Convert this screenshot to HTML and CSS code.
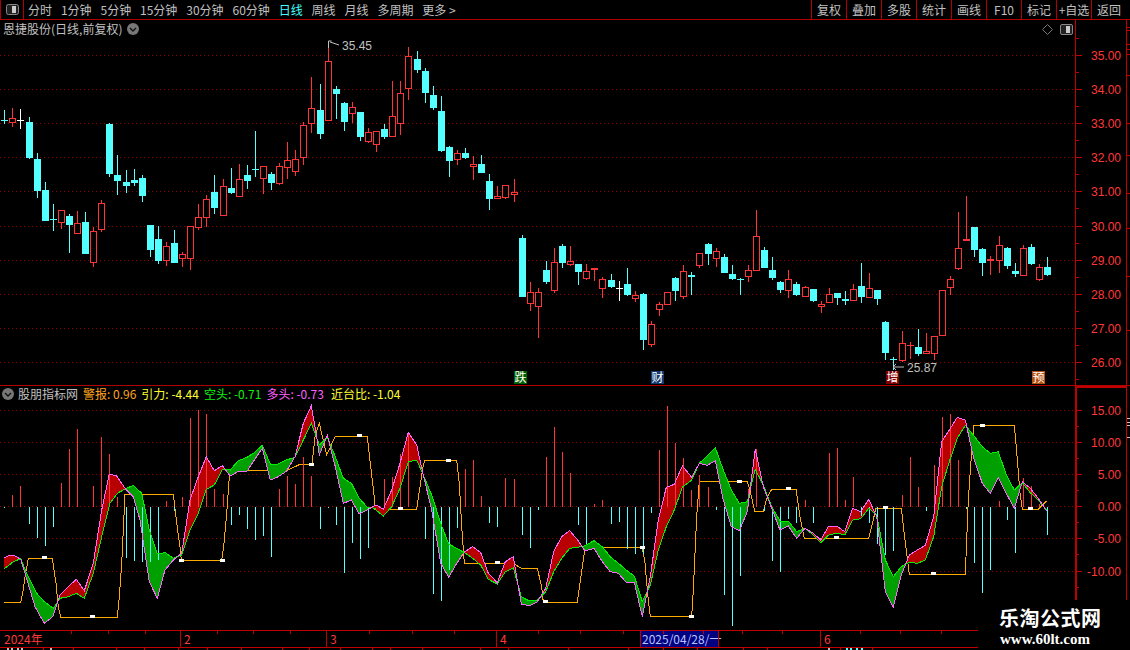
FILE: index.html
```html
<!DOCTYPE html>
<html lang="zh">
<head>
<meta charset="utf-8">
<title>恩捷股份</title>
<link rel="stylesheet" href="styles.css">
</head>
<body>
<div class="app">
  <header class="toolbar">
    <div class="toggle">
      <svg class="toggle-icon" width="13" height="11" viewBox="0 0 13 11"><rect x=".5" y=".5" width="12" height="10" rx="2" fill="#222" stroke="#888"/><rect x="6" y="2" width="4" height="7" fill="#ccc"/></svg>
    </div>
    <nav class="tabs">
      <span class="tab">分时</span><span class="tab">1分钟</span><span class="tab">5分钟</span><span class="tab">15分钟</span><span class="tab">30分钟</span><span class="tab">60分钟</span><span class="tab tab-active">日线</span><span class="tab">周线</span><span class="tab">月线</span><span class="tab">多周期</span><span class="tab">更多 &gt;</span>
    </nav>
    <div class="actions">
      <span class="action">复权</span><span class="action">叠加</span><span class="action">多股</span><span class="action">统计</span><span class="action">画线</span><span class="action">F10</span><span class="action">标记</span><span class="action">+自选</span><span class="action">返回</span>
    </div>
  </header>

  <section class="price-panel">
    <svg id="price" class="chart" width="1130" height="365" viewBox="0 20 1130 365"></svg>
    <div class="panel-title">
      <span>恩捷股份(日线,前复权)</span>
      <svg class="chevron" width="12" height="12" viewBox="0 0 12 12"><circle cx="6" cy="6" r="6" fill="#777"/><path d="M3 5l3 3 3-3" fill="none" stroke="#111" stroke-width="1.4"/></svg>
    </div>
    <div class="panel-tools">
      <svg width="11" height="11" viewBox="0 0 11 11"><path d="M5.5.5l5 5-5 5-5-5z" fill="none" stroke="#777"/></svg>
      <svg width="13" height="11" viewBox="0 0 13 11"><rect x=".5" y=".5" width="12" height="10" rx="1.5" fill="#222" stroke="#888"/><rect x="6" y="2" width="4" height="7" fill="#ccc"/></svg>
    </div>
  </section>

  <section class="indicator-panel">
    <svg id="indicator" class="chart" width="1130" height="244" viewBox="0 386 1130 244"></svg>
    <div class="indicator-title">
      <svg class="chevron-left" width="12" height="12" viewBox="0 0 12 12"><circle cx="6" cy="6" r="6" fill="#777"/><path d="M3 5l3 3 3-3" fill="none" stroke="#111" stroke-width="1.4"/></svg>
      <span class="ind-name">股朋指标网</span>
      <span class="ind-orange">警报: 0.96</span>
      <span class="ind-yellow">引力: -4.44</span>
      <span class="ind-green">空头: -0.71</span>
      <span class="ind-pink">多头: -0.73</span>
      <span class="ind-yellow ind-last">近台比: -1.04</span>
    </div>
  </section>

  <footer class="date-bar">
    <span class="date-cell">2024年</span>
    <span class="date-cell">2</span>
    <span class="date-cell">3</span>
    <span class="date-cell">4</span>
    <span class="date-cell date-current">2025/04/28/一</span>
    <span class="date-cell"></span>
    <span class="date-cell">6</span>
    <svg id="dateTicks" class="date-ticks" width="978" height="3" viewBox="0 0 978 3"></svg>
  </footer>
  <div class="sub-bar">
    <svg id="subTicks" width="978" height="2" viewBox="0 648 978 2"></svg>
  </div>

  <div class="watermark">
    <div class="wm-title">乐淘公式网</div>
    <div class="wm-url">www.60lt.com</div>
  </div>
</div>
<script src="chart.js"></script>
</body>
</html>
```
FILE: styles.css
```css
* { box-sizing: border-box; }
html, body { margin: 0; padding: 0; background: #000; }
body {
  width: 1130px;
  height: 650px;
  overflow: hidden;
  font-family: "Noto Sans CJK SC", "Liberation Sans", sans-serif;
  font-size: 12px;
  color: #c0c0c0;
}
.app {
  position: relative;
  width: 1130px;
  height: 650px;
  display: flex;
  flex-direction: column;
  background: #000;
}
.toolbar {
  height: 20px;
  flex: none;
  display: flex;
  align-items: stretch;
  border-bottom: 1px solid #b00000;
  line-height: 19px;
}
.toggle {
  width: 24px;
  display: flex;
  align-items: center;
  justify-content: center;
  border-left: 1px solid #b00000;
  border-right: 1px solid #b00000;
}
.tabs {
  display: flex;
  gap: 8.9px;
  margin-left: 4px;
}
.tab-active { color: #4ff; }
.actions {
  display: flex;
  margin-left: auto;
  margin-right: 4px;
}
.action {
  width: 35px;
  text-align: center;
  border-left: 1px solid #b00000;
  white-space: nowrap;
}
.price-panel {
  position: relative;
  height: 366px;
  flex: none;
  border-bottom: 1px solid #b00000;
}
.indicator-panel {
  position: relative;
  height: 244px;
  flex: none;
}
.chart { display: block; }
.panel-title {
  position: absolute;
  left: 3px;
  top: 0;
  height: 18px;
  line-height: 18px;
  display: flex;
  align-items: center;
  gap: 5px;
}
.panel-tools {
  position: absolute;
  top: 4px;
  left: 1042px;
  display: flex;
  gap: 7px;
  align-items: center;
}
.indicator-title {
  position: absolute;
  left: 2px;
  top: 0;
  height: 16px;
  line-height: 16px;
  display: flex;
  align-items: center;
  white-space: nowrap;
  gap: 5px;
}
.ind-name { margin-left: -1px; }
.ind-orange { color: #ffa51e; }
.ind-yellow { color: #ffff30; }
.ind-green { color: #10f010; }
.ind-pink { color: #ff60ff; }
.ind-last { margin-left: 2px; }
.date-bar {
  position: relative;
  width: 978px;
  height: 18px;
  flex: none;
  display: grid;
  grid-template-columns: 180px 146px 170px 144px 78px 102px 158px;
  border-top: 1px solid #c00000;
  border-bottom: 1px solid #c00000;
  line-height: 16px;
  color: #ff3838;
}
.date-cell {
  padding-left: 3px;
  border-left: 1px solid #c00000;
}
.date-cell:first-child {
  border-left: 0;
  padding-left: 4px;
}
.date-current {
  background: #000080;
  color: #b8c4ff;
  padding-left: 1px;
  white-space: nowrap;
}
.date-ticks {
  position: absolute;
  left: 0;
  top: 0;
}
.sub-bar {
  height: 2px;
  flex: none;
  overflow: hidden;
}
.sub-bar svg { display: block; }
.watermark {
  position: absolute;
  left: 999px;
  top: 605px;
  color: #fff;
}
.wm-title {
  font-family: "Noto Sans CJK SC", sans-serif;
  font-weight: 700;
  font-size: 20px;
  letter-spacing: .5px;
  line-height: 26px;
}
.wm-url {
  font-family: "Liberation Serif", serif;
  font-weight: 700;
  font-size: 15px;
  line-height: 16px;
  margin-left: 1px;
}
.axis-text {
  font-family: "Liberation Sans", sans-serif;
  font-size: 12px;
  fill: #ff3838;
  text-anchor: end;
}
.note-text {
  font-family: "Liberation Sans", sans-serif;
  font-size: 12px;
  fill: #c0c0c0;
}
.tag-text {
  font-family: "Noto Sans CJK SC", sans-serif;
  font-size: 12px;
  fill: #fff;
  text-anchor: middle;
}
```
FILE: chart.js
```js
var xOf = function (i) { return Math.round(4.33 + 8.083 * i); };
var RED = '#ff3434', CYAN = '#54ffff';
var GRID = '#900000';

// top, bottom, wick top, wick bottom, colour
var candles = [
[120,120,110,124,'c'],[118,123,108,127,'r'],[120,120,109,129,'w'],[122,158,117,159,'c'],[159,191,153,198,'c'],
[190,221,182,221,'c'],[219,219,204,231,'c'],[210,223,210,229,'r'],[216,225,214,253,'c'],[223,234,211,234,'r'],
[222,254,212,254,'c'],[231,263,227,267,'r'],[203,230,200,232,'r'],[124,174,123,177,'c'],[175,181,155,195,'c'],
[182,186,170,193,'c'],[180,183,169,186,'c'],[178,196,175,202,'c'],[225,250,225,257,'c'],[239,261,226,264,'c'],
[246,261,242,266,'r'],[243,263,230,263,'c'],[254,259,252,267,'r'],[226,259,226,270,'r'],[217,228,204,230,'r'],
[199,218,195,227,'r'],[192,208,175,214,'c'],[186,216,179,216,'r'],[188,193,168,194,'c'],[179,197,164,197,'r'],
[175,181,165,189,'c'],[169,169,131,177,'c'],[166,179,166,194,'r'],[174,183,172,190,'c'],[166,184,163,185,'r'],
[160,168,142,179,'r'],[159,172,150,176,'r'],[125,158,122,165,'r'],[108,124,77,133,'r'],[110,134,84,139,'c'],
[61,121,41,121,'r'],[89,94,86,119,'c'],[103,122,102,131,'c'],[107,114,102,123,'r'],[112,137,112,141,'c'],
[132,142,128,143,'r'],[131,145,131,152,'r'],[129,137,124,139,'c'],[116,137,81,137,'r'],[93,124,81,135,'r'],
[56,89,47,100,'r'],[59,70,51,73,'c'],[71,93,68,103,'c'],[95,108,86,110,'c'],[111,151,96,152,'c'],
[147,161,146,177,'c'],[153,160,150,165,'r'],[153,158,148,159,'c'],[164,167,156,180,'r'],[164,173,155,173,'c'],
[181,199,174,210,'c'],[196,199,186,199,'r'],[185,198,185,199,'r'],[192,195,179,202,'r'],[238,297,235,297,'c'],
[292,304,282,311,'r'],[292,307,288,338,'r'],[270,282,261,284,'c'],[262,291,248,293,'r'],[246,263,244,268,'c'],
[261,265,246,266,'r'],[264,272,264,285,'c'],[271,279,264,280,'r'],[268,270,268,281,'r'],[279,289,277,298,'r'],
[280,287,274,288,'c'],[288,288,281,301,'w'],[284,295,268,296,'c'],[295,299,291,302,'r'],[294,340,293,350,'c'],
[324,345,321,347,'r'],[304,310,302,316,'r'],[292,305,292,305,'r'],[278,291,277,301,'c'],[271,297,265,299,'r'],
[275,277,272,295,'c'],[253,266,253,268,'r'],[244,254,243,265,'c'],[251,259,248,267,'r'],[257,273,254,273,'c'],
[274,279,265,280,'c'],[279,279,278,295,'c'],[270,277,265,282,'r'],[236,271,210,271,'r'],[250,268,247,268,'c'],
[270,278,257,280,'c'],[282,290,281,293,'c'],[279,291,270,298,'r'],[284,295,282,296,'c'],[287,297,286,297,'r'],
[289,301,289,302,'c'],[304,307,301,313,'r'],[294,303,288,303,'r'],[293,298,293,305,'c'],[299,301,291,305,'c'],
[289,301,284,301,'r'],[286,297,263,303,'c'],[288,298,273,298,'r'],[290,299,290,305,'c'],[322,353,321,360,'c'],
[359,359,357,370,'c'],[343,361,331,362,'r'],[345,345,342,359,'r'],[347,354,329,356,'c'],[351,354,333,354,'r'],
[336,354,336,360,'r'],[290,336,290,336,'r'],[279,288,276,295,'r'],[248,269,212,270,'r'],[239,241,196,241,'r'],
[227,250,227,257,'c'],[249,263,248,276,'c'],[259,261,256,275,'r'],[245,261,236,273,'r'],[248,266,247,269,'c'],
[271,274,263,277,'c'],[248,276,245,276,'r'],[247,264,244,265,'c'],[267,280,264,281,'r'],[267,275,257,276,'c']
];

var bars = [324,285,258,372,414,438,381,249,147,87,0,258,111,162,291,474,483,486,486,480,303,333,291,54,30,42,267,282,375,345,387,420,408,471,267,228,252,171,228,387,324,375,519,429,477,444,0,237,231,162,100,0,417,582,603,510,384,207,180,288,369,381,234,237,405,444,330,171,81,156,219,375,435,312,300,372,366,447,462,462,339,150,18,129,174,270,225,261,330,585,678,528,267,148,333,483,516,357,369,300,369,321,159,144,300,231,348,369,432,465,453,285,171,261,333,195,51,42,180,327,489,579,510,303,360,459,234,258,312,405];

function seg(ox, flat) {
  var out = [];
  for (var k = 0; k < flat.length; k += 2) out.push([ox + flat[k] / 3, 400 + flat[k + 1] / 3]);
  return out;
}

var pink = seg(0, [12,473,30,466,45,468,62,478,75,520,90,570,105,620,133,670,158,650,172,610,180,585,205,560,229,538,253,572,280,490,305,330,328,222,350,228,375,265,400,290,420,360,435,460,448,545,472,595,495,510,520,480,545,460,570,300,595,230,619,170,643,212,667,197,691,228,715,214,741,214,763,180,787,145,811,240,835,230,859,214,885,170,910,70,934,18,950,110,958,165,982,105,1006,200,1030,310,1054,300,1078,342,1102,330,1126,315])
  .concat(seg(370, [18,315,40,328,65,270,90,190,115,97,140,135,160,225,185,330,212,490,236,532,260,490,284,455,308,440,332,458,355,520,382,548,406,485,430,470,454,612,478,617,502,605,527,565,551,455,575,410,599,392,623,420,645,453,672,445,697,485,721,515,745,520,769,547,793,547,817,650,841,530,865,360,889,262,913,253,937,198,965,232,988,190,1012,196,1036,182,1060,300,1084,380,1108,392,1132,335]))
  .concat(seg(750, [0,270,16,148,40,260,65,325,90,390,115,378,140,415,165,385,190,400,212,420,236,378,260,378,284,395,308,325,332,335,356,298,380,350,406,575,430,622,454,525,478,465,502,450,526,436,551,350,575,125,598,90,622,52,646,60,670,170,697,250,721,280,745,232,769,280,793,325,817,245,841,265,865,295,889,332]));

var green = seg(0, [12,507,40,485,62,476,80,520,110,580,133,605,160,625,180,595,205,590,229,580,253,595,280,520,305,410,330,310,352,280,375,267,400,256,425,280,448,390,472,462,496,458,520,475,545,465,570,390,595,340,619,268,643,255,667,208,691,210,715,182,741,172,763,158,787,136,811,192,835,192,859,180,885,172,910,120,934,70,958,135,982,112,1006,170,1030,235,1054,250,1078,295,1102,322,1126,325])
  .concat(seg(370, [18,330,40,348,65,320,90,265,115,185,140,180,160,225,187,290,212,370,236,432,260,445,284,458,308,475,332,495,355,538,382,552,406,515,430,503,454,590,478,603,502,600,527,575,551,515,575,475,599,445,623,442,645,437,672,422,697,440,721,470,745,490,769,510,793,528,817,605,841,555,865,450,889,380,913,330,937,262,965,240,988,190,1012,168,1036,143,1060,210,1084,270,1108,310,1132,305]))
  .concat(seg(750, [0,270,16,208,40,255,65,320,90,363,115,363,140,395,165,385,190,405,212,428,236,405,260,399,284,405,308,360,332,356,356,325,380,345,406,480,430,530,454,500,478,487,502,490,526,480,551,410,575,260,598,185,622,115,646,76,670,105,697,140,721,160,745,155,769,225,793,270,817,248,841,278,865,300,889,330]));

var orange = seg(0, [12,607,62,607,70,570,75,530,85,476,157,476,168,550,175,620,182,652,352,652,358,590,365,490,375,282,520,282,530,370,540,440,544,480,665,482,672,430,680,340,688,230,690,212,860,212,900,193,936,192,945,110,958,70,980,165,1005,110,1102,110,1112,200,1125,310])
  .concat(seg(370, [14,328,140,328,150,260,160,195,165,181,260,181,268,250,275,380,283,490,430,490,454,505,502,505,515,560,520,607,622,607,630,550,640,480,645,442,817,442,825,490,835,600,841,650,965,650,970,570,980,350,988,244,1132,244]))
  .concat(seg(750, [0,270,14,334,40,334,52,290,65,268,138,268,150,350,163,415,356,415,378,325,454,325,465,420,478,523,646,523,655,300,668,110,672,76,793,76,800,155,810,280,817,328,865,328,889,303]));

var marks = seg(0, [133,473,277,650,544,480,667,480,934,192,1078,107])
  .concat(seg(370, [91,326,235,180,382,488,526,605,817,441,965,648,1108,243]))
  .concat(seg(750, [115,266,259,413,406,323,550,521,697,75,841,326]));

function line(x1, y1, x2, y2, color, extra) {
  return '<line x1="' + x1 + '" y1="' + y1 + '" x2="' + x2 + '" y2="' + y2 + '" stroke="' + color + '" shape-rendering="crispEdges"' + (extra || '') + '/>';
}
function poly(pts, color) {
  var s = pts.map(function (p) { return p[0].toFixed(1) + ',' + p[1].toFixed(1); }).join(' ');
  return '<polyline points="' + s + '" fill="none" stroke="' + color + '" shape-rendering="crispEdges"/>';
}
function interp(pts, x) {
  for (var k = 1; k < pts.length; k++) {
    if (x <= pts[k][0]) {
      var a = pts[k - 1], b = pts[k];
      var t = b[0] === a[0] ? 0 : (x - a[0]) / (b[0] - a[0]);
      return a[1] + (b[1] - a[1]) * t;
    }
  }
  return pts[pts.length - 1][1];
}

/* price panel */
var p = '';
var priceLevels = [[55.5,'35.00'],[89.5,'34.00'],[123.5,'33.00'],[157.5,'32.00'],[191.5,'31.00'],[226.5,'30.00'],[260.5,'29.00'],[294.5,'28.00'],[328.5,'27.00'],[362.5,'26.00']];
priceLevels.forEach(function (lv) {
  p += line(0, lv[0], 1076, lv[0], GRID, ' stroke-dasharray="1 3"');
  p += line(1076, lv[0], 1082, lv[0], '#c00000');
  p += '<text class="axis-text" x="1121" y="' + (lv[0] + 4) + '">' + lv[1] + '</text>';
  p += line(1076, lv[0] + 17, 1079, lv[0] + 17, '#c00000');
});
p += line(1076, 38.5, 1079, 38.5, '#c00000');
p += line(1075.5, 20, 1075.5, 385, '#c00000');
p += line(1126.5, 20, 1126.5, 385, '#c00000');
[27, 30, 44, 49, 54, 75, 123, 155, 193, 228, 276, 330].forEach(function (y) {
  p += line(1127, y + .5, 1130, y + .5, '#c00000');
});
candles.forEach(function (c, i) {
  var X = xOf(i), col = c[4] === 'r' ? RED : (c[4] === 'w' ? '#fff' : CYAN);
  p += line(X + .5, c[2], X + .5, c[3], col);
  if (c[0] === c[1]) {
    p += line(X - 3, c[0] + .5, X + 4, c[0] + .5, col);
  } else if (c[4] === 'r' && c[1] - c[0] > 2) {
    p += '<rect x="' + (X - 2.5) + '" y="' + (c[0] + .5) + '" width="6" height="' + (c[1] - c[0] - 1) + '" fill="#000" stroke="' + col + '" shape-rendering="crispEdges"/>';
  } else {
    p += '<rect x="' + (X - 3) + '" y="' + c[0] + '" width="7" height="' + (c[1] - c[0]) + '" fill="' + col + '" shape-rendering="crispEdges"/>';
  }
});
p += '<path d="M328.5 48V41h3M330 42l9 3" fill="none" stroke="#c0c0c0"/>';
p += '<text class="note-text" x="342" y="50">35.45</text>';
p += '<path d="M893 367h11M893 367l3-3M893 367l3 3" fill="none" stroke="#c0c0c0"/>';
p += '<text class="note-text" x="907" y="372">25.87</text>';
[[514, '跌', '#006000'], [651, '财', '#103a70'], [886, '增', '#800000'], [1032, '预', '#b4500f']].forEach(function (t) {
  p += '<rect x="' + t[0] + '" y="371" width="13" height="13" fill="' + t[2] + '"/>';
  p += '<text class="tag-text" x="' + (t[0] + 6.5) + '" y="382">' + t[1] + '</text>';
});
document.getElementById('price').innerHTML = p;

/* indicator panel */
var q = '';
var base = 506.5;
[[410.5,'15.00'],[442.5,'10.00'],[474.5,'5.00'],[506.5,'0.00'],[538.5,'-5.00'],[571.5,'-10.00']].forEach(function (lv) {
  q += line(0, lv[0], 1076, lv[0], GRID, ' stroke-dasharray="1 3"');
  q += line(1076, lv[0], 1082, lv[0], '#c00000');
  q += line(1076, lv[0] + 16, 1079, lv[0] + 16, '#c00000');
  q += '<text class="axis-text" x="1121" y="' + (lv[0] + 4) + '">' + lv[1] + '</text>';
});
q += poly(orange, '#ffaa00');
var redFill = '', greenFill = '';
for (var x = 4; x <= 1046; x++) {
  var a = interp(pink, x + .5), b = interp(green, x + .5);
  var seg1 = 'M' + x + '.5 ' + Math.min(a, b).toFixed(1) + 'V' + Math.max(a, b).toFixed(1);
  if (a < b) redFill += seg1; else greenFill += seg1;
}
q += '<path d="' + redFill + '" stroke="#b80000" fill="none" shape-rendering="crispEdges"/>';
q += '<path d="' + greenFill + '" stroke="#00a000" fill="none" shape-rendering="crispEdges"/>';
bars.forEach(function (zy, i) {
  if (!zy) return;
  var y = 400 + zy / 3, X = xOf(i) + .5;
  q += line(X, base, X, y, zy < 320 ? RED : CYAN);
});
q += poly(green, '#00f000');
q += poly(pink, '#ff66ff');
marks.forEach(function (m) {
  q += '<rect x="' + Math.round(m[0] - 2.5) + '" y="' + Math.round(m[1] - 1.5) + '" width="5" height="3" fill="#fff"/>';
});
q += '<rect x="1075" y="386" width="2" height="214" fill="#c00000"/>';
q += '<rect x="1077" y="386" width="50" height="2" fill="#c00000"/>';
q += '<rect x="1126" y="386" width="1" height="214" fill="#c00000"/>';
[418, 422, 425, 437].forEach(function (y) {
  q += line(1127, y + .5, 1130, y + .5, '#c8c8c8');
});
document.getElementById('indicator').innerHTML = q;

/* date ticks */
var t = '';
[71,108,145,217,253,290,369,412,454,538,580,623,663,703,742,782,860,900,941].forEach(function (x) {
  t += line(x + .5, 0, x + .5, 3, '#c00000');
});
document.getElementById('dateTicks').innerHTML = t;

var s = '';
[[7,'#c0c0c0'],[11,'#c0c0c0'],[17,'#c0c0c0'],[21,'#c0c0c0'],[50,'#c0c0c0'],[846,'#54ffff'],[850,'#54ffff'],[856,'#54ffff'],[861,'#54ffff'],[828,'#c0c0c0']].forEach(function (m) {
  s += '<rect x="' + m[0] + '" y="648" width="2" height="2" fill="' + m[1] + '"/>';
});
[43,73,116,144,178,207,241,282,309,340,372,390,422,480,508,568,628,663,697,743,767,840,872].forEach(function (x) {
  s += line(x + .5, 648, x + .5, 650, '#c00000');
});
document.getElementById('subTicks').innerHTML = s;
```
